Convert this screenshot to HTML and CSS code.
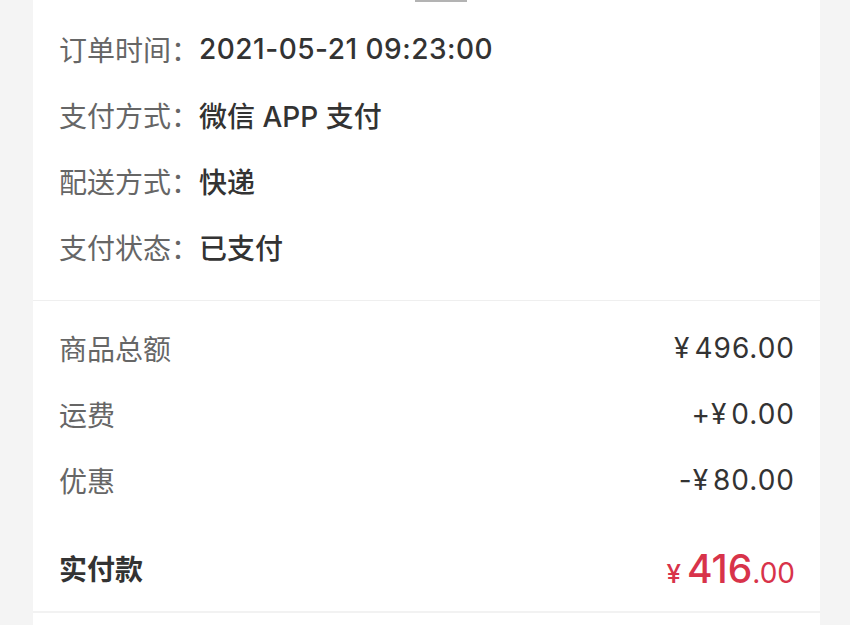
FILE: index.html
```html
<!DOCTYPE html>
<html lang="zh-CN">
<head>
  <meta charset="UTF-8" />
  <meta name="viewport" content="width=device-width, initial-scale=1.0" />
  <title>订单详情</title>
  <link rel="stylesheet" href="styles.css">
</head>
<body>
  <div class="card">
    <!-- Order info -->
    <section class="info">
      <div class="handle"></div>
      <div class="infoRow"><span class="label">订单时间：</span><span class="value num">2021-05-21 09:23:00</span></div>
      <div class="infoRow"><span class="label">支付方式：</span><span class="value">微信 APP 支付</span></div>
      <div class="infoRow"><span class="label">配送方式：</span><span class="value">快递</span></div>
      <div class="infoRow"><span class="label">支付状态：</span><span class="value">已支付</span></div>
    </section>

    <!-- Price summary -->
    <section class="summary">
      <div class="sumRow"><span class="label">商品总额</span><span class="value"><span class="yen">¥</span>496.00</span></div>
      <div class="sumRow"><span class="label">运费</span><span class="value">+<span class="yen">¥</span>0.00</span></div>
      <div class="sumRow"><span class="label">优惠</span><span class="value">-<span class="yen">¥</span>80.00</span></div>
      <div class="sumRow total">
        <span class="totalLabel">实付款</span>
        <span class="totalPrice"><span class="yen">¥</span><span class="int">416</span><span class="dec">.00</span></span>
      </div>
    </section>
    <div class="next"></div>
  </div>
</body>
</html>
```

FILE: styles.css
```css
/* Global */
* { box-sizing: border-box; margin: 0; padding: 0; }
body {
  font-family: Inter, "Noto Sans CJK SC", sans-serif;
  background-color: #f4f4f4;
  color: #333;
  height: 625px;
  overflow: hidden;
}
.card {
  width: 787px;
  margin-left: 33px;
  background-color: #fff;
}
/* Order info */
.info {
  padding-bottom: 20px;
  border-bottom: 1px solid #efefef;
}
.handle {
  width: 52px;
  height: 2px;
  margin-left: 382px;
  margin-bottom: 14px;
  background-color: #b3b3b3;
}
.infoRow {
  height: 66px;
  display: flex;
  align-items: center;
  padding-left: 26px;
  font-size: 28px;
}
.label { color: #666; }
.value { color: #333; font-weight: 500; }
.value.num { letter-spacing: 0.5px; }
.yen { margin-right: 4px; }
/* Price summary */
.summary {
  padding-top: 14px;
  padding-bottom: 10px;
  border-bottom: 2px solid #f2f2f2;
}
.sumRow {
  height: 66px;
  display: flex;
  align-items: center;
  justify-content: space-between;
  padding: 0 25px 0 26px;
  font-size: 28px;
}
.sumRow .value { font-weight: 400; letter-spacing: 1px; }
.sumRow.total { margin-top: 22px; }
.totalLabel {
  font-weight: 600;
  color: #333;
}
.totalPrice {
  color: #d8334a;
  display: flex;
  align-items: baseline;
}
.totalPrice .yen { font-size: 26px; font-weight: 500; margin-right: 6px; }
.totalPrice .int { font-size: 39px; font-weight: 500; }
.totalPrice .dec { font-size: 28px; }
.next { height: 20px; }
```
